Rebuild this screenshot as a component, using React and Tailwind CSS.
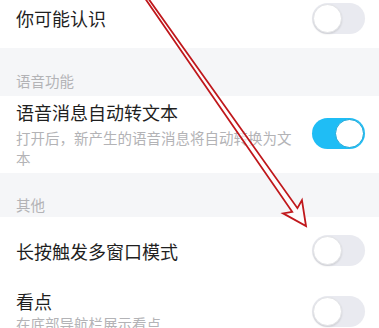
const Toggle = ({ on }) => (
  <div
    className={`relative w-[53px] h-[31px] rounded-full shrink-0 ${
      on ? 'bg-[#1fbdf5]' : 'bg-[#e9eaf0]'
    }`}
  >
    <div
      className={`absolute top-[1px] w-[29px] h-[29px] rounded-full bg-white ${
        on
          ? 'right-[1px] border border-[#19a7d9]'
          : 'left-[1px] border border-[#e2e3e6] shadow-[0_1px_2px_rgba(0,0,0,0.12)]'
      }`}
    />
  </div>
);

const Section = ({ label, className }) => (
  <div className={`bg-[#f5f6f8] px-4 ${className}`}>
    <p className="text-[14.5px] leading-[20px] text-[#b3b3b6]">{label}</p>
  </div>
);

// red hand-drawn pointer over the screenshot
const Arrow = () => (
  <svg
    className="absolute inset-0 pointer-events-none"
    width="379"
    height="328"
    viewBox="0 0 379 328"
  >
    <g transform="translate(306 226) rotate(55)">
      <polygon
        points="0,0 -23.5,-11.5 -19.5,-3.2 -290,-1.2 -290,1.2 -19.5,3.2 -23.5,11.5"
        fill="#ffffff"
        fillOpacity="0.7"
        stroke="#c0181c"
        strokeWidth="1.8"
        strokeLinejoin="miter"
      />
    </g>
  </svg>
);

export default function App() {
  return (
    <div
      className="relative w-[379px] h-[328px] overflow-hidden bg-white"
      style={{ fontFamily: '"Noto Sans CJK SC", "Noto Sans", sans-serif' }}
    >
      <div className="flex items-center justify-between h-[48px] pb-[12px] pl-4 pr-[14px]">
        <p className="text-[18px] leading-[26px] text-[#1f1f1f]">你可能认识</p>
        <Toggle />
      </div>

      <Section label="语音功能" className="pt-[23px] pb-[5px]" />

      <div className="flex items-center justify-between pt-[3px] pb-[5px] pl-4 pr-[14px]">
        <div>
          <p className="text-[18px] leading-[26px] text-[#1f1f1f]">语音消息自动转文本</p>
          <p className="mt-[3px] w-[283px] text-[14.5px] leading-[20px] text-[#b3b3b6]">
            打开后，新产生的语音消息将自动转换为文本
          </p>
        </div>
        <Toggle on />
      </div>

      <Section label="其他" className="pt-[22px] pb-[2px]" />

      <div className="flex items-center justify-between pt-[18px] pb-[17px] pl-4 pr-[14px]">
        <p className="text-[18px] leading-[26px] text-[#1f1f1f]">长按触发多窗口模式</p>
        <Toggle />
      </div>

      <div className="flex items-center justify-between pt-[5px] pl-4 pr-[14px]">
        <div>
          <p className="text-[18px] leading-[26px] text-[#1f1f1f]">看点</p>
          <p className="text-[14.5px] leading-[20px] text-[#b3b3b6]">在底部导航栏展示看点</p>
        </div>
        <Toggle />
      </div>

      <Arrow />
    </div>
  );
}
